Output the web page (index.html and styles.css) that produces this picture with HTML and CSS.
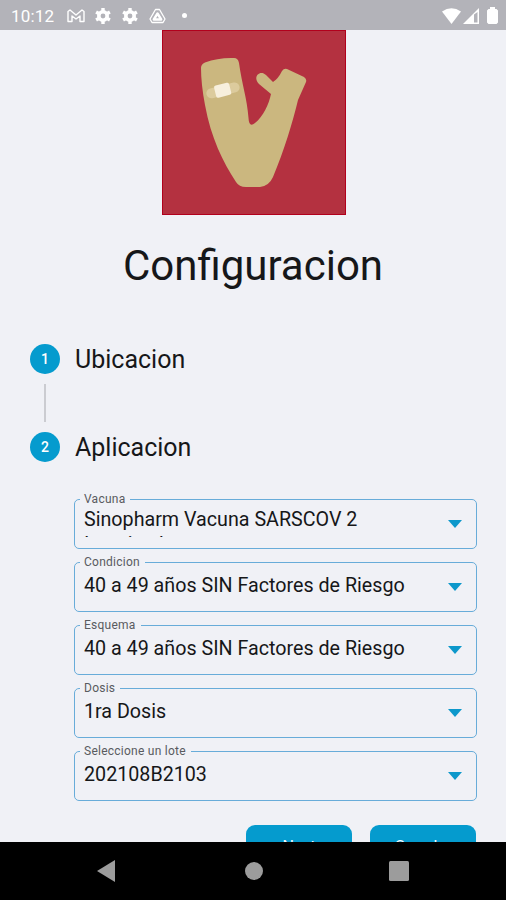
FILE: index.html
```html
<!DOCTYPE html>
<html lang="es">

<head>
  <meta charset="UTF-8" />
  <title>Configuracion</title>
  <link rel="stylesheet" href="styles.css">
</head>

<body>

  <header class="status-bar">
    <span class="time">10:12</span>
    <svg class="mail" width="18" height="14" viewBox="0 0 18 14"><path d="M1 12.5V2.5L3 1l6 5 6-5 2 1.500v10h-4V7L9 10 5 7v5.500z" fill="none" stroke="#fff" stroke-width="1.400" stroke-linejoin="round"/></svg>
    <svg class="gear" width="16" height="16" viewBox="0 0 16 16"><circle cx="8" cy="8" r="4.200" fill="none" stroke="#fff" stroke-width="3.600"/><path d="M8 0v3M8 13v3M1.100 4l2.600 1.500M12.300 10.500l2.600 1.500M1.100 12l2.600-1.500M12.300 5.500l2.600-1.500" stroke="#fff" stroke-width="3.400"/></svg>
    <svg class="gear" width="16" height="16" viewBox="0 0 16 16"><circle cx="8" cy="8" r="4.200" fill="none" stroke="#fff" stroke-width="3.600"/><path d="M8 0v3M8 13v3M1.100 4l2.600 1.500M12.300 10.500l2.600 1.500M1.100 12l2.600-1.500M12.300 5.500l2.600-1.500" stroke="#fff" stroke-width="3.400"/></svg>
    <svg class="drive" width="17" height="16" viewBox="0 0 17 16"><path d="M6.500 1.500h4l5.500 9.500-2 3.500H3L1 11z" fill="none" stroke="#fff" stroke-width="1.300" stroke-linejoin="round"/><path d="M8.500 5.500l3.700 6H4.800z" fill="none" stroke="#fff" stroke-width="2.400" stroke-linejoin="round"/></svg>
    <span class="dot"></span>
    <span class="system">
      <svg width="19" height="16" viewBox="0 0 19 16"><path d="M0 3.500Q9.500-3 19 3.500L9.500 16z" fill="#fff"/></svg>
      <svg width="16" height="16" viewBox="0 0 16 16"><path d="M16 0v16H0zM11 6.500v8h3.500V4z" fill="#fff" fill-rule="evenodd"/></svg>
      <svg class="battery" width="11" height="17" viewBox="0 0 11 17"><path d="M3 0h5v2h1.500L11 3.500v12L9.500 17h-8L0 15.500v-12L1.500 2H3z" fill="#fff"/></svg>
    </span>
  </header>

  <main class="screen">
    <svg class="logo" width="184" height="185" viewBox="0 0 184 185">
      <rect width="184" height="185" fill="#b43140"/>
      <rect x=".5" y=".5" width="183" height="184" fill="none" stroke="#b2001c"/>
      <path d="M39 38Q39 34 43 32.500Q56 27.500 72 28Q76 28 77 33C80 55 85 68 86.500 88Q87 98 93 93C101 87 107 74 109 64L97 54C90 47 98 39 104 45L111 52Q116 49 120 41Q122 38 125 39L142 47Q145 49 144 52L136 70C131 91 122 121 111 147Q107 156 98 157H84Q77 157 74 152C61 132 49 108 43 75Q39 54 39 38z" fill="#cbb77f"/>
      <g transform="rotate(-14 60.500 60.500)">
        <rect x="44" y="55.500" width="34" height="10" rx="5" fill="#dccb9d"/>
        <rect x="53" y="54" width="15.500" height="12.500" rx="2" fill="#f7efdd"/>
      </g>
    </svg>

    <h1>Configuracion</h1>

    <div class="step">
      <span class="number">1</span>
      <h2>Ubicacion</h2>
    </div>
    <div class="line"></div>
    <div class="step">
      <span class="number">2</span>
      <h2>Aplicacion</h2>
    </div>

    <form class="fields">
      <fieldset class="field two-lines">
        <legend>Vacuna</legend>
        <div class="value">Sinopharm Vacuna SARSCOV 2 Inactivada</div>
        <span class="arrow"></span>
      </fieldset>
      <fieldset class="field">
        <legend>Condicion</legend>
        <div class="value">40 a 49 años SIN Factores de Riesgo</div>
        <span class="arrow"></span>
      </fieldset>
      <fieldset class="field">
        <legend>Esquema</legend>
        <div class="value">40 a 49 años SIN Factores de Riesgo</div>
        <span class="arrow"></span>
      </fieldset>
      <fieldset class="field">
        <legend>Dosis</legend>
        <div class="value">1ra Dosis</div>
        <span class="arrow"></span>
      </fieldset>
      <fieldset class="field">
        <legend>Seleccione un lote</legend>
        <div class="value">202108B2103</div>
        <span class="arrow"></span>
      </fieldset>

      <div class="buttons">
        <button type="button">Next</button>
        <button type="button">Guardar</button>
      </div>
    </form>
  </main>

  <nav class="nav-bar">
    <svg width="18" height="22" viewBox="0 0 18 22"><path d="M0 11L18 0v22z" fill="#9c9c9c"/></svg>
    <svg class="home" width="18" height="18" viewBox="0 0 18 18"><circle cx="9" cy="9" r="9" fill="#9c9c9c"/></svg>
    <svg width="20" height="20" viewBox="0 0 20 20"><rect width="20" height="20" rx="1.500" fill="#9c9c9c"/></svg>
  </nav>

</body>
</html>
```
FILE: styles.css
```css
* {
  box-sizing: border-box;
}

body {
  margin: 0;
  height: 900px;
  display: flex;
  flex-direction: column;
  overflow: hidden;
  background: #f0f1f6;
  color: #161719;
  font-family: Roboto, sans-serif;
}

.status-bar {
  flex: none;
  height: 30px;
  padding: 1px 8px 0 11px;
  display: flex;
  align-items: center;
  background: #b3b3b9;
  color: #fff;
}

.time {
  width: 56px;
  font-size: 17px;
  letter-spacing: 0.2px;
}

.mail {
  margin-right: 10px;
}

.gear {
  margin-right: 11px;
}

.drive {
  margin-right: 16px;
}

.dot {
  width: 5px;
  height: 5px;
  border-radius: 50%;
  background: #fff;
}

.system {
  margin-left: auto;
  display: flex;
  align-items: center;
  gap: 2px;
}

.battery {
  margin-left: 6px;
}

.screen {
  flex: 1;
  min-height: 0;
  overflow: hidden;
}

.logo {
  display: block;
  margin-left: 162px;
}

h1 {
  margin: 26px 0 53px;
  text-align: center;
  font-size: 42px;
  line-height: 50px;
  font-weight: 400;
}

.step {
  height: 30px;
  padding-left: 30px;
  display: flex;
  align-items: center;
  gap: 15px;
}

.number {
  width: 30px;
  height: 30px;
  border-radius: 50%;
  background: #059bce;
  color: #fff;
  font-size: 14px;
  font-weight: 500;
  line-height: 30px;
  text-align: center;
}

h2 {
  margin: 0;
  padding-top: 1px;
  font-size: 25px;
  font-weight: 400;
  line-height: 30px;
}

.line {
  width: 2px;
  height: 38px;
  margin: 10px 0 10px 44px;
  background: #cbccd1;
}

.fields {
  margin: 30px 29px 0 74px;
}

.field {
  height: 57px;
  min-width: 0;
  margin: 0 0 6px;
  padding: 0 14px 0 5px;
  border: 1.500px solid #68acd9;
  border-radius: 5px;
  display: flex;
  justify-content: space-between;
}

legend {
  height: 14px;
  padding: 0 5px 0 4px;
  color: #595b60;
  font-size: 12px;
  letter-spacing: 0.25px;
  line-height: 14px;
}

.value {
  width: 330px;
  height: 36px;
  margin-top: 4px;
  padding-left: 4px;
  overflow: hidden;
  font-size: 19.7px;
  line-height: 26px;
}

.two-lines .value {
  height: 30px;
  margin-top: 1px;
  line-height: 25px;
}

.arrow {
  margin-top: 14px;
  width: 0;
  height: 0;
  border-left: 7px solid transparent;
  border-right: 7px solid transparent;
  border-top: 8px solid #0d98cb;
}

.buttons {
  display: flex;
  justify-content: flex-end;
  gap: 18px;
  margin: 24px 1px 0 0;
}

button {
  width: 106px;
  height: 43px;
  border: none;
  border-radius: 9px;
  background: #059bce;
  color: #fff;
  font-family: Roboto, sans-serif;
  font-size: 16px;
}

.nav-bar {
  flex: none;
  height: 58px;
  padding: 0 97px;
  display: flex;
  align-items: center;
  justify-content: space-between;
  background: #000;
}

.home {
  margin-left: 3px;
}
```
